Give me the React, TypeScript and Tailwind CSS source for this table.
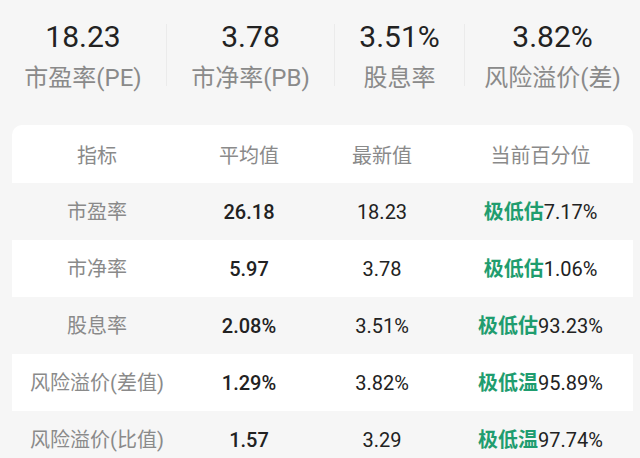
const stats = [
  { value: '18.23', label: '市盈率(PE)', width: 'w-[166px]' },
  { value: '3.78', label: '市净率(PB)', width: 'w-[168px]' },
  { value: '3.51%', label: '股息率', width: 'w-[130px]' },
  { value: '3.82%', label: '风险溢价(差)', width: 'flex-1' }
];

const rows = [
  { name: '市盈率', avg: '26.18', latest: '18.23', tag: '极低估', pct: '7.17%' },
  { name: '市净率', avg: '5.97', latest: '3.78', tag: '极低估', pct: '1.06%' },
  { name: '股息率', avg: '2.08%', latest: '3.51%', tag: '极低估', pct: '93.23%' },
  { name: '风险溢价(差值)', avg: '1.29%', latest: '3.82%', tag: '极低温', pct: '95.89%' },
  { name: '风险溢价(比值)', avg: '1.57', latest: '3.29', tag: '极低温', pct: '97.74%' }
];

export default function App() {
  const font = { fontFamily: 'Roboto, "Noto Sans CJK SC", sans-serif' };

  const statsEl = (
    <div className="flex pt-[24px] h-[125px]">
      {stats.map((s, i) => (
        <div
          key={s.label}
          className={`${s.width} flex flex-col items-center ${
            i > 0 ? 'border-l border-[#ebebeb]' : ''
          } h-[62px]`}
        >
          <span className="text-[30px] leading-[36px] text-[#222] -mt-[5px]">
            {s.value}
          </span>
          <span className="text-[24px] leading-[32px] text-[#8a8a8a] mt-[7px]">
            {s.label}
          </span>
        </div>
      ))}
    </div>
  );

  const cell = 'flex items-center justify-center';

  return (
    <div className="w-[640px] h-[458px] overflow-hidden bg-[#f6f6f6]" style={font}>
      {statsEl}
      <div className="ml-[12px] w-[621px] bg-white rounded-t-[10px]">
        <div className="flex h-[58px] pt-[3px] text-[20px] text-[#8a8a8a]">
          <div className={`${cell} w-[170px]`}>指标</div>
          <div className={`${cell} w-[134px]`}>平均值</div>
          <div className={`${cell} w-[132px]`}>最新值</div>
          <div className={`${cell} flex-1`}>当前百分位</div>
        </div>
        {rows.map((r, i) => (
          <div
            key={r.name}
            className={`flex h-[57px] text-[20px] ${
              i % 2 === 0 ? 'bg-[#f6f6f6]' : 'bg-white'
            }`}
          >
            <div className={`${cell} w-[170px] text-[#8a8a8a]`}>{r.name}</div>
            <div className={`${cell} w-[134px] text-[#222] font-medium`}>{r.avg}</div>
            <div className={`${cell} w-[132px] text-[#222]`}>{r.latest}</div>
            <div className={`${cell} flex-1 text-[#222]`}>
              <span className="text-[#1f9d6f] font-bold">{r.tag}</span>
              {r.pct}
            </div>
          </div>
        ))}
      </div>
    </div>
  );
}
